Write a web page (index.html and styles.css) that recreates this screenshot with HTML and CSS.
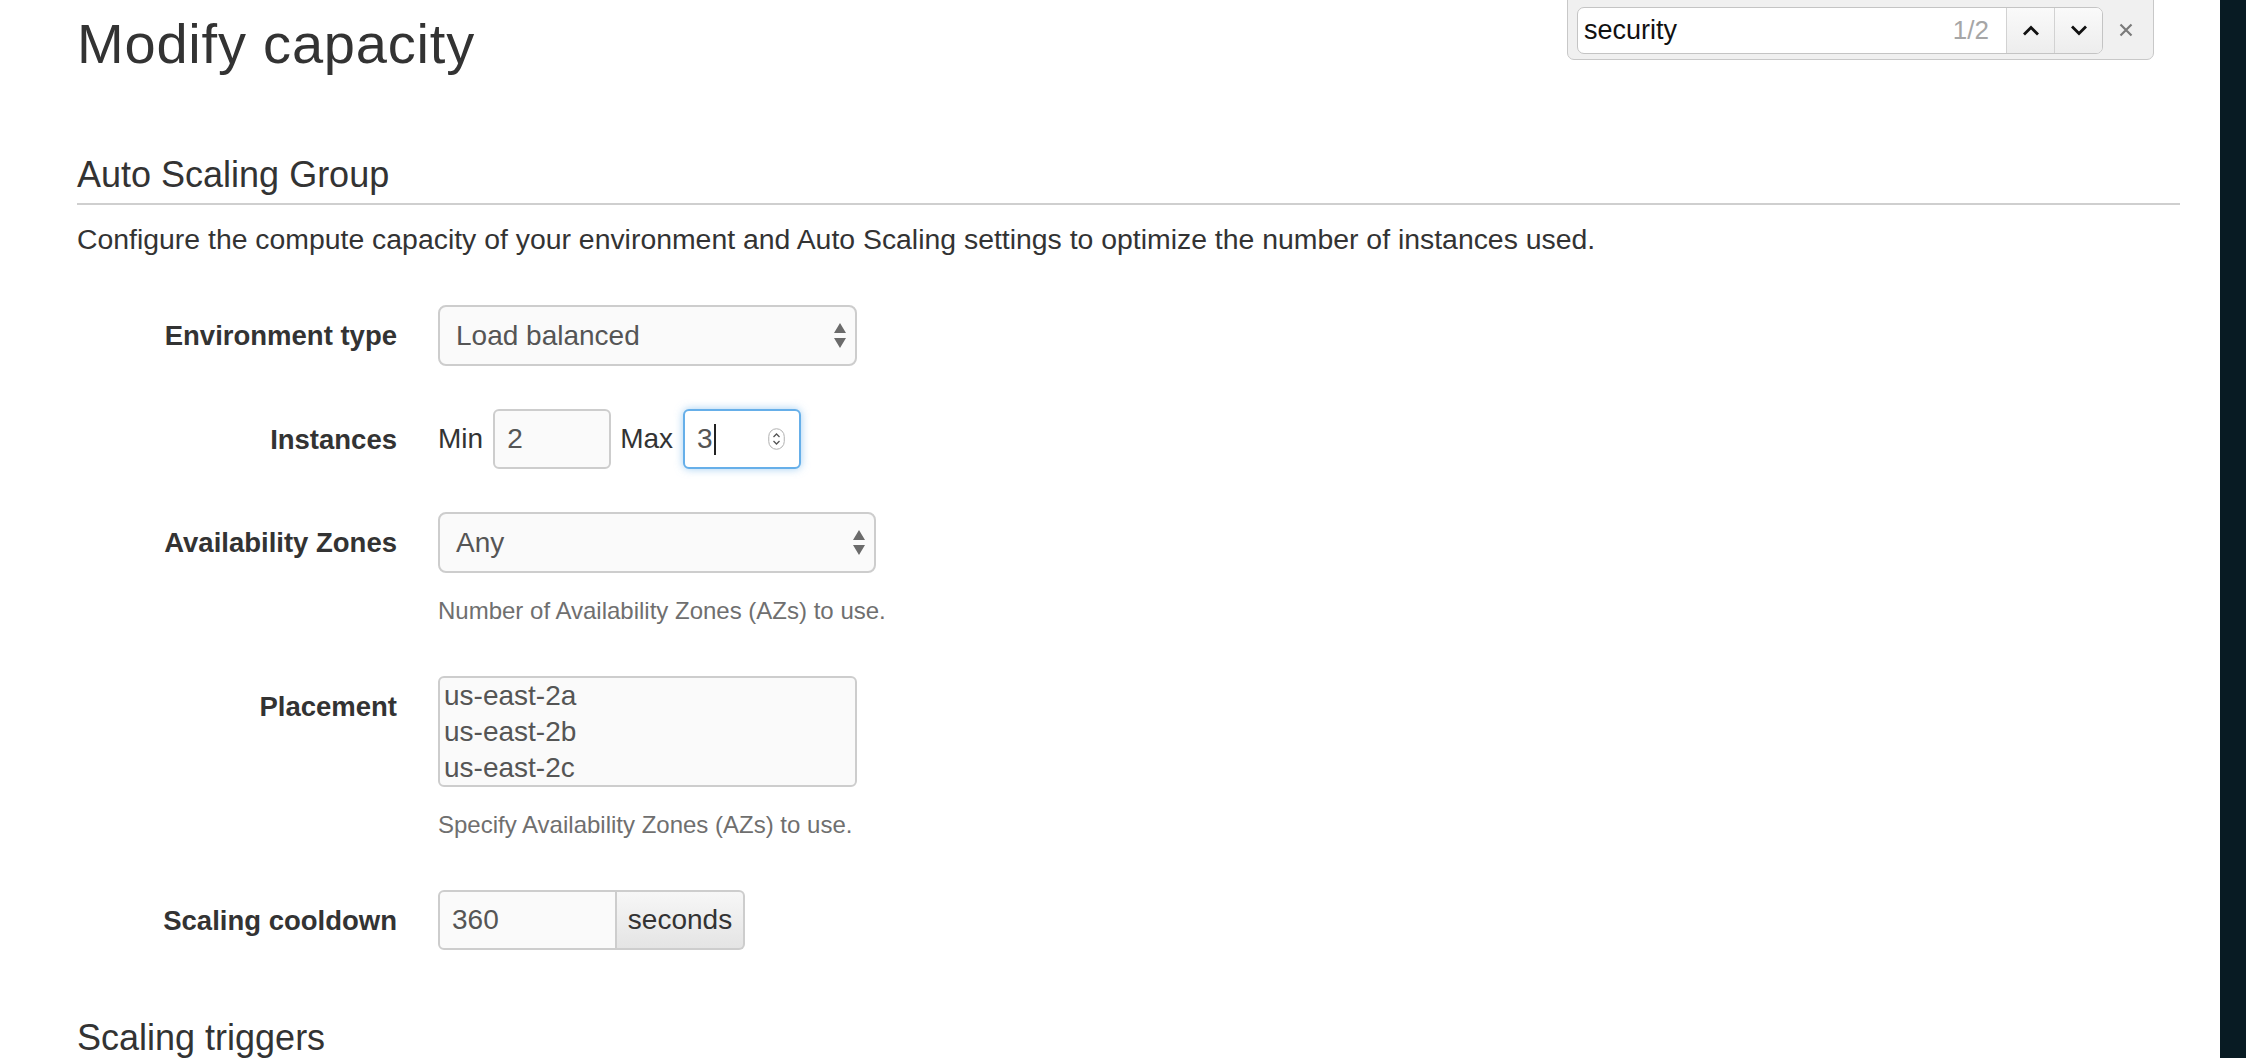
FILE: index.html
```html
<!DOCTYPE html>
<html lang="en">
<head>
    <meta charset="UTF-8">
    <meta name="viewport" content="width=device-width, initial-scale=1.0">
    <title>Modify capacity</title>
    <link rel="stylesheet" href="styles.css">
</head>
<body>
    <div class="page">
        <main class="content">
            <h1 class="page-title">Modify capacity</h1>

            <section class="panel">
                <h3 class="section-title ruled">Auto Scaling Group</h3>
                <p class="section-desc">Configure the compute capacity of your environment and Auto Scaling settings to optimize the number of instances used.</p>

                <div class="form-row">
                    <label class="control-label">Environment type</label>
                    <div class="controls">
                        <div class="select select-env">
                            <span>Load balanced</span>
                            <svg class="updown" width="12" height="26" viewBox="0 0 12 26"><path d="M0 10 L6 0 L12 10 Z M0 15 L12 15 L6 25 Z" fill="#6b6b6b"/></svg>
                        </div>
                    </div>
                </div>

                <div class="form-row">
                    <label class="control-label">Instances</label>
                    <div class="controls inline">
                        <span class="inline-label">Min</span>
                        <input class="text-input small" type="text" value="2">
                        <span class="inline-label">Max</span>
                        <div class="text-input small focused">
                            <span>3</span><span class="caret"></span>
                            <svg class="spinner" width="17" height="22" viewBox="0 0 17 22">
                                <rect x="0.75" y="0.75" width="15.5" height="20.5" rx="7.75" fill="#fff" stroke="#b0b0b0" stroke-width="1"/>
                                <path d="M5.5 9 L8.5 6 L11.5 9 M5.5 13 L8.5 16 L11.5 13" fill="none" stroke="#555" stroke-width="1.3"/>
                            </svg>
                        </div>
                    </div>
                </div>

                <div class="form-row">
                    <label class="control-label">Availability Zones</label>
                    <div class="controls">
                        <div class="select select-az">
                            <span>Any</span>
                            <svg class="updown" width="12" height="26" viewBox="0 0 12 26"><path d="M0 10 L6 0 L12 10 Z M0 15 L12 15 L6 25 Z" fill="#6b6b6b"/></svg>
                        </div>
                        <p class="help-block">Number of Availability Zones (AZs) to use.</p>
                    </div>
                </div>

                <div class="form-row">
                    <label class="control-label">Placement</label>
                    <div class="controls">
                        <div class="listbox">
                            <div class="list-option">us-east-2a</div>
                            <div class="list-option">us-east-2b</div>
                            <div class="list-option">us-east-2c</div>
                        </div>
                        <p class="help-block">Specify Availability Zones (AZs) to use.</p>
                    </div>
                </div>

                <div class="form-row">
                    <label class="control-label">Scaling cooldown</label>
                    <div class="controls">
                        <div class="input-group">
                            <input class="text-input group-input" type="text" value="360">
                            <span class="addon">seconds</span>
                        </div>
                    </div>
                </div>
            </section>

            <h3 class="section-title triggers">Scaling triggers</h3>
        </main>
        <div class="dark-edge"></div>
    </div>

    <div class="find-bar">
        <div class="find-field">
            <span class="find-query">security</span>
            <span class="find-count">1/2</span>
            <div class="find-buttons">
                <span class="find-btn">
                    <svg width="20" height="11" viewBox="0 0 20 11"><path d="M3 9.5 L10 2.5 L17 9.5" fill="none" stroke="#111" stroke-width="2.8"/></svg>
                </span>
                <span class="find-btn">
                    <svg width="20" height="11" viewBox="0 0 20 11"><path d="M3 1.5 L10 8.5 L17 1.5" fill="none" stroke="#111" stroke-width="2.8"/></svg>
                </span>
            </div>
        </div>
        <svg class="find-close" width="14" height="14" viewBox="0 0 14 14"><path d="M1.5 1.5 L12.5 12.5 M12.5 1.5 L1.5 12.5" stroke="#7a7a7a" stroke-width="2.2"/></svg>
    </div>
</body>
</html>
```

FILE: styles.css
```css
body {
    margin: 0;
    font-family: "Liberation Sans", Arial, sans-serif;
    color: #333;
    background-color: #fff;
    height: 1058px;
    overflow: hidden;
}
.page {
    display: flex;
    height: 100%;
}
.content {
    flex: 1;
    padding: 13px 40px 0 77px;
}
.dark-edge {
    width: 26px;
    background-color: #081b23;
}
.page-title {
    margin: 0;
    font-size: 56px;
    font-weight: normal;
    letter-spacing: 0.8px;
    line-height: 1.1;
    color: #333;
}
.section-title {
    margin: 80px 0 0;
    font-size: 36px;
    font-weight: normal;
    line-height: 1.1;
    color: #333;
}
.section-title.ruled {
    padding-bottom: 9px;
    border-bottom: 2px solid #cfcfcf;
}
.section-title.triggers {
    margin-top: 68px;
}
.section-desc {
    margin: 14px 0 46px;
    font-size: 28.4px;
    line-height: 40px;
}
.form-row {
    display: grid;
    grid-template-columns: 320px 1fr;
    column-gap: 41px;
    margin-bottom: 43px;
}
.control-label {
    text-align: right;
    font-size: 27.5px;
    font-weight: bold;
    line-height: 40px;
    padding-top: 11px;
}
.controls.inline {
    display: flex;
    align-items: center;
}
.inline-label {
    font-size: 28px;
    margin-right: 10px;
}
.select {
    box-sizing: border-box;
    height: 61px;
    display: flex;
    align-items: center;
    justify-content: space-between;
    padding: 0 9px 0 16px;
    border: 2px solid #cdcdcd;
    border-radius: 8px;
    background-color: #fafafa;
    font-size: 28px;
    color: #555;
}
.select-env {
    width: 419px;
}
.select-az {
    width: 438px;
}
.text-input {
    box-sizing: border-box;
    height: 60px;
    padding: 0 12px;
    border: 2px solid #cdcdcd;
    border-radius: 6px;
    background-color: #fafafa;
    font-family: inherit;
    font-size: 28px;
    color: #555;
    outline: none;
}
.text-input.small {
    width: 118px;
    margin-right: 9px;
}
.text-input.focused {
    display: flex;
    align-items: center;
    border-color: #66afe9;
    background-color: #fff;
    box-shadow: 0 0 8px rgba(102, 175, 233, 0.6);
}
.caret {
    width: 2px;
    height: 31px;
    margin-left: 1px;
    background-color: #222;
}
.spinner {
    margin-left: auto;
    margin-right: 2px;
}
.help-block {
    margin: 21px 0 5px;
    font-size: 24px;
    line-height: 34px;
    color: #6f6f6f;
}
.listbox {
    box-sizing: border-box;
    width: 419px;
    height: 111px;
    padding: 0 4px;
    border: 2px solid #cdcdcd;
    border-radius: 6px;
    background-color: #fafafa;
    font-size: 28px;
    line-height: 36px;
    color: #555;
}
.input-group {
    display: flex;
    height: 60px;
}
.group-input {
    width: 179px;
    border-radius: 6px 0 0 6px;
}
.addon {
    box-sizing: border-box;
    width: 128px;
    display: flex;
    align-items: center;
    justify-content: center;
    border: 2px solid #cdcdcd;
    border-left: none;
    border-radius: 0 6px 6px 0;
    background: linear-gradient(#f7f7f7, #e4e4e4);
    font-size: 28px;
    color: #333;
}
.find-bar {
    position: absolute;
    top: -2px;
    left: 1567px;
    box-sizing: border-box;
    width: 587px;
    height: 62px;
    display: flex;
    align-items: center;
    padding: 2px 0 0 9px;
    background-color: #f0f0f0;
    border: 1.5px solid #c8c8c8;
    border-radius: 0 0 7px 7px;
}
.find-field {
    box-sizing: border-box;
    width: 526px;
    height: 47px;
    display: flex;
    align-items: center;
    background-color: #fff;
    border: 1.5px solid #c4c4c4;
    border-radius: 7px;
    overflow: hidden;
}
.find-query {
    flex: 1;
    padding-left: 6px;
    font-size: 27px;
    color: #111;
}
.find-count {
    margin-right: 17px;
    font-size: 26px;
    color: #a6a6a6;
}
.find-buttons {
    display: flex;
    height: 100%;
}
.find-btn {
    width: 47px;
    display: flex;
    align-items: center;
    justify-content: center;
    border-left: 1px solid #d2d2d2;
    background: linear-gradient(#fafafa, #ededed);
}
.find-close {
    margin-left: 16px;
}
```
